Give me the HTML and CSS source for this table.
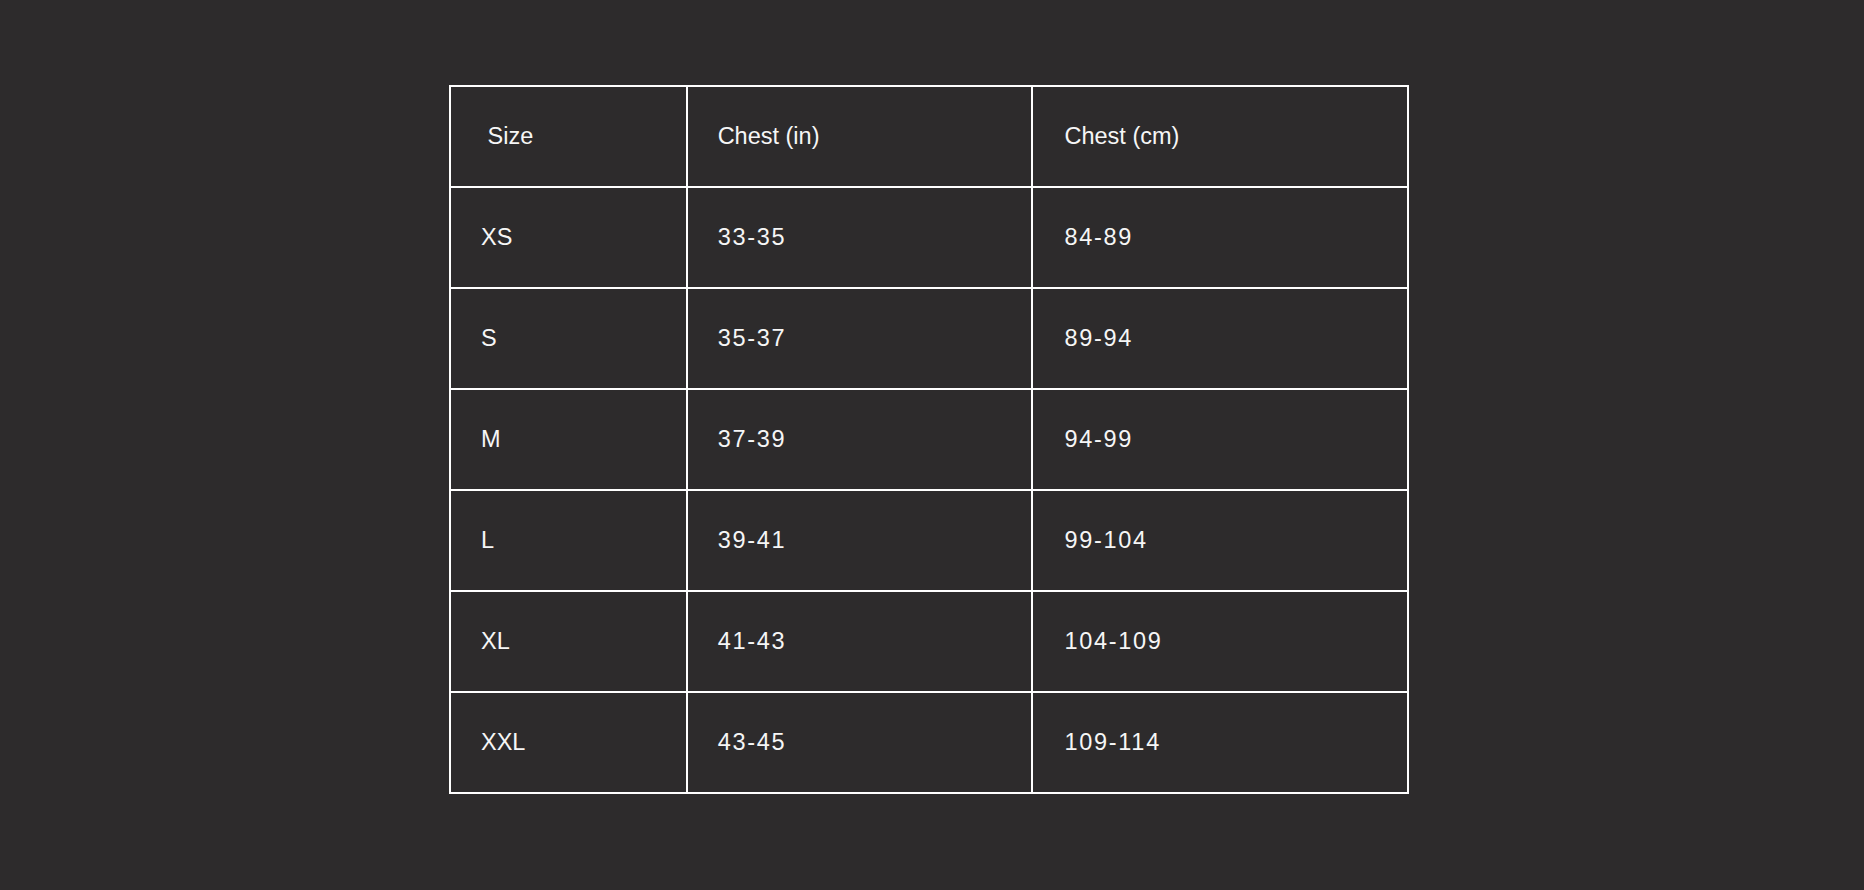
FILE: index.html
```html
<!DOCTYPE html>
<html>
<head>
<meta charset="utf-8">
<link rel="stylesheet" href="styles.css">
</head>
<body>
<div class="page">
  <table class="size-table">
    <colgroup>
      <col class="c1">
      <col class="c2">
      <col class="c3">
    </colgroup>
    <tr><td>&nbsp;Size</td><td>Chest (in)</td><td class="cm">Chest (cm)</td></tr>
    <tr><td>XS</td><td class="num">33-35</td><td class="num cm">84-89</td></tr>
    <tr><td>S</td><td class="num">35-37</td><td class="num cm">89-94</td></tr>
    <tr><td>M</td><td class="num">37-39</td><td class="num cm">94-99</td></tr>
    <tr><td>L</td><td class="num">39-41</td><td class="num cm">99-104</td></tr>
    <tr><td>XL</td><td class="num">41-43</td><td class="num cm">104-109</td></tr>
    <tr><td>XXL</td><td class="num">43-45</td><td class="num cm">109-114</td></tr>
  </table>
</div>
</body>
</html>
```

FILE: styles.css
```css
html, body {
  margin: 0;
  padding: 0;
  background: #2d2b2c;
  height: 100%;
}
.page {
  padding: 85px 0 0 449px;
}
.size-table {
  border-collapse: collapse;
  table-layout: fixed;
  width: 960px;
  height: 709px;
  font-family: "Liberation Sans", Arial, sans-serif;
  font-size: 23.5px;
  color: #f6f6f6;
}
.c1 { width: 24.7%; }
.c2 { width: 36%; }
.c3 { width: 39.3%; }
.size-table td {
  border: 2px solid #ffffff;
  padding: 0 0 0 30px;
  vertical-align: middle;
  text-align: left;
  line-height: 1.2;
}
.size-table td.cm {
  padding-left: 32px;
}
.size-table td.num {
  letter-spacing: 1.7px;
}
```
